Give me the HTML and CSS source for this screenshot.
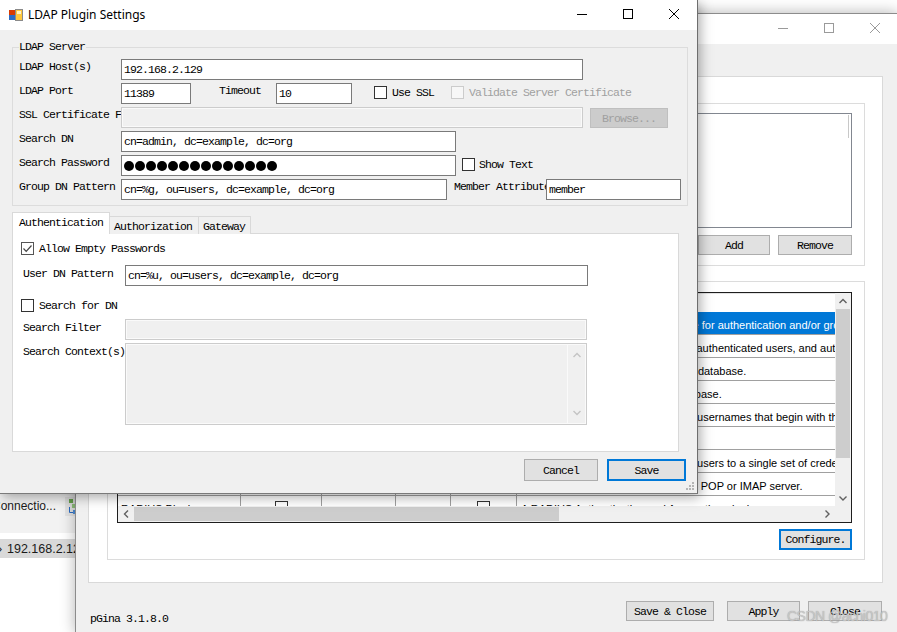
FILE: index.html
```html
<!DOCTYPE html>
<html>
<head>
<meta charset="utf-8">
<title>LDAP Plugin Settings</title>
<link rel="stylesheet" href="styles.css">
</head>
<body>
<div class="screen">

  <div class="bgapp">
    <div class="bg-top"></div>
    <div class="bg-conn">
      <span class="bg-conn-text">Connectio...</span>
      <span class="bg-icon">
        <svg width="9" height="16" viewBox="0 0 9 16"><rect x="1" y="1" width="4" height="4" fill="#6aa84f"/><rect x="4" y="6" width="4" height="4" fill="#93c47d"/><path d="M1.5 9v5.5H7" fill="none" stroke="#2b6cc4"/><rect x="5" y="12" width="4" height="4" fill="#4f8fd8"/></svg>
      </span>
    </div>
    <div class="bg-gap"></div>
    <div class="bg-host"><span class="bg-arrow">›</span><span class="bg-ip">192.168.2.12</span></div>
  </div>

  <div class="pgina">
    <div class="titlebar">
      <div class="caps inactive">
        <div class="cap"><svg width="10" height="10"><path d="M0 5.5H10" stroke="currentColor"/></svg></div>
        <div class="cap"><svg width="10" height="10"><rect x="0.5" y="0.5" width="9" height="9" fill="none" stroke="currentColor"/></svg></div>
        <div class="cap"><svg width="10" height="10"><path d="M0 0L10 10M10 0L0 10" stroke="currentColor"/></svg></div>
      </div>
    </div>
    <div class="pg-body">
      <div class="panel">
        <div class="group g1">
          <div class="listbox"><span class="lb-stub"></span></div>
          <div class="btnrow">
            <div class="btn w72">Add</div>
            <div class="btn w74">Remove</div>
          </div>
        </div>
        <div class="group g2">
          <div class="dgv">
            <div class="dgv-cells">
              <div class="dgv-head"></div>
              <div class="dgv-row sel"><div class="c c1">LDAP</div><div class="c c2"><span class="cb"></span></div><div class="c c3"><span class="cb"></span></div><div class="c c4"></div><div class="c c5"><span class="cb"></span></div><div class="c c6">Uses the LDAP server as the source for authentication and/or group authorization.</div></div>
              <div class="dgv-row"><div class="c c1">Local Machine</div><div class="c c2"><span class="cb"></span></div><div class="c c3"><span class="cb"></span></div><div class="c c4"><span class="cb"></span></div><div class="c c5"><span class="cb"></span></div><div class="c c6">Manages all local user accounts for authenticated users, and authorizes by group membership.</div></div>
              <div class="dgv-row"><div class="c c1">MySQL Auth</div><div class="c c2"><span class="cb"></span></div><div class="c c3"><span class="cb"></span></div><div class="c c4"></div><div class="c c5"><span class="cb"></span></div><div class="c c6">Uses the MySQL server as the user database.</div></div>
              <div class="dgv-row"><div class="c c1">MySQL Logger</div><div class="c c2"></div><div class="c c3"></div><div class="c c4"></div><div class="c c5"></div><div class="c c6">Logs all events to your MySQL database.</div></div>
              <div class="dgv-row"><div class="c c1">Username Mod</div><div class="c c2"><span class="cb"></span></div><div class="c c3"><span class="cb"></span></div><div class="c c4"><span class="cb"></span></div><div class="c c5"></div><div class="c c6">Removes the domain prefix from all usernames that begin with the domain name.</div></div>
              <div class="dgv-row"><div class="c c1">Scripting</div><div class="c c2"></div><div class="c c3"></div><div class="c c4"></div><div class="c c5"><span class="cb"></span></div><div class="c c6">Runs login scripts.</div></div>
              <div class="dgv-row"><div class="c c1">Single User</div><div class="c c2"></div><div class="c c3"></div><div class="c c4"></div><div class="c c5"><span class="cb"></span></div><div class="c c6">Maps each externally authenticated users to a single set of credentials.</div></div>
              <div class="dgv-row"><div class="c c1">POP/IMAP</div><div class="c c2"><span class="cb"></span></div><div class="c c3"></div><div class="c c4"></div><div class="c c5"></div><div class="c c6">Authenticates all the users against a POP or IMAP server.</div></div>
              <div class="dgv-row"><div class="c c1">RADIUS Plugin</div><div class="c c2"><span class="cb"></span></div><div class="c c3"></div><div class="c c4"></div><div class="c c5"><span class="cb"></span></div><div class="c c6">A RADIUS Authentication and Accounting plugin.</div></div>
            </div>
            <div class="vscroll">
              <div class="sarrow"><svg width="16" height="16"><path d="M4.5 10L8 6.5L11.5 10" fill="none" stroke="#606060" stroke-width="1.4"/></svg></div>
              <div class="thumb-v"></div>
              <div class="strack"></div>
              <div class="sarrow"><svg width="16" height="16"><path d="M4.5 6.5L8 10L11.5 6.5" fill="none" stroke="#606060" stroke-width="1.4"/></svg></div>
            </div>
            <div class="hscroll">
              <div class="sarrow"><svg width="16" height="16"><path d="M10 4.5L6.5 8L10 11.5" fill="none" stroke="#606060" stroke-width="1.4"/></svg></div>
              <div class="thumb-h"></div>
              <div class="strack"></div>
              <div class="sarrow"><svg width="16" height="16"><path d="M6.5 4.5L10 8L6.5 11.5" fill="none" stroke="#606060" stroke-width="1.4"/></svg></div>
            </div>
            <div class="corner"></div>
          </div>
          <div class="btnrow">
            <div class="btn btn-focus configure">Configure.</div>
          </div>
        </div>
      </div>
      <div class="pg-footer">
        <span class="version">pGina 3.1.8.0</span>
        <div class="footer-btns">
          <div class="btn saveclose">Save &amp; Close</div>
          <div class="btn apply">Apply</div>
          <div class="btn close">Close</div>
        </div>
      </div>
    </div>
  </div>

  <div class="dialog">
    <div class="titlebar dlg-titlebar">
      <svg class="app-icon" width="14" height="12" viewBox="0 0 14 12"><rect x="0" y="1" width="6" height="5" fill="#d83b01"/><rect x="0" y="6" width="6" height="5" fill="#2b6cc4"/><rect x="6.5" y="0.5" width="7" height="11" fill="#ffc83d" stroke="#8a8a8a"/><rect x="8" y="2" width="4" height="3" fill="#fff3c4"/></svg>
      <span class="title">LDAP Plugin Settings</span>
      <div class="caps">
        <div class="cap"><svg width="10" height="10"><path d="M0 5.5H10" stroke="currentColor"/></svg></div>
        <div class="cap"><svg width="10" height="10"><rect x="0.5" y="0.5" width="9" height="9" fill="none" stroke="currentColor"/></svg></div>
        <div class="cap"><svg width="10" height="10"><path d="M0 0L10 10M10 0L0 10" stroke="currentColor"/></svg></div>
      </div>
    </div>
    <div class="dlg-body">
      <div class="groupbox">
        <span class="legend">LDAP Server</span>
        <div class="frow"><span class="lbl">LDAP Host(s)</span><div class="tb w462">192.168.2.129</div></div>
        <div class="frow">
          <span class="lbl">LDAP Port</span><div class="tb w70">11389</div>
          <span class="lbl-timeout">Timeout</span><div class="tb w76">10</div>
          <div class="chk ssl"><span class="cb"></span>Use SSL</div>
          <div class="chk validate disabled"><span class="cb"></span>Validate Server Certificate</div>
        </div>
        <div class="frow"><span class="lbl">SSL Certificate File</span><div class="tb w462 tb-disabled"></div><div class="btn btn-disabled browse">Browse...</div></div>
        <div class="frow"><span class="lbl">Search DN</span><div class="tb w335">cn=admin, dc=example, dc=org</div></div>
        <div class="frow">
          <span class="lbl">Search Password</span>
          <div class="tb w335 pw"><i></i><i></i><i></i><i></i><i></i><i></i><i></i><i></i><i></i><i></i><i></i><i></i><i></i><i></i></div>
          <div class="chk showtext"><span class="cb"></span>Show Text</div>
        </div>
        <div class="frow">
          <span class="lbl">Group DN Pattern</span><div class="tb w326">cn=%g, ou=users, dc=example, dc=org</div>
          <span class="lbl-member">Member Attribute</span><div class="tb w135">member</div>
        </div>
      </div>
      <div class="tabs">
        <div class="tab active">Authentication</div>
        <div class="tab t2">Authorization</div>
        <div class="tab t3">Gateway</div>
      </div>
      <div class="tabpage">
        <div class="chk tp-chk1"><span class="cb checked"><svg width="11" height="11" viewBox="0 0 11 11"><path d="M1.5 5.5L4.2 8.3L9.5 2.5" fill="none" stroke="#444" stroke-width="1.2"/></svg></span>Allow Empty Passwords</div>
        <div class="frow tp-row1"><span class="lbl">User DN Pattern</span><div class="tb w463">cn=%u, ou=users, dc=example, dc=org</div></div>
        <div class="chk tp-chk2"><span class="cb"></span>Search for DN</div>
        <div class="frow tp-row2"><span class="lbl">Search Filter</span><div class="tb tb-disabled w462"></div></div>
        <div class="frow tp-row3">
          <span class="lbl lbl-top">Search Context(s)</span>
          <div class="ta tb-disabled">
            <div class="ta-scroll">
              <svg width="16" height="16"><path d="M4.5 9L8 5.5L11.5 9" fill="none" stroke="#c4c4c4" stroke-width="1.4"/></svg>
              <svg width="16" height="16"><path d="M4.5 6L8 9.5L11.5 6" fill="none" stroke="#c4c4c4" stroke-width="1.4"/></svg>
            </div>
          </div>
        </div>
      </div>
      <div class="dlg-btns">
        <div class="btn cancel">Cancel</div>
        <div class="btn btn-focus save">Save</div>
      </div>
    </div>
    <svg class="grip" width="9" height="9" viewBox="0 0 9 9"><g fill="#b4b4b4"><rect x="6" y="0" width="2" height="2"/><rect x="3" y="3" width="2" height="2"/><rect x="6" y="3" width="2" height="2"/><rect x="0" y="6" width="2" height="2"/><rect x="3" y="6" width="2" height="2"/><rect x="6" y="6" width="2" height="2"/></g></svg>
  </div>

  <div class="watermark">CSDN @achi010</div>
</div>
</body>
</html>
```

FILE: styles.css
```css
* { box-sizing: border-box; }
html, body { margin: 0; padding: 0; }
body {
  width: 897px; height: 632px; overflow: hidden; background: #fff;
  font-family: "Liberation Mono", "DejaVu Sans Mono", monospace;
  font-size: 11.5px; letter-spacing: -0.9px; color: #000;
}
.screen { position: relative; width: 897px; height: 632px; overflow: hidden; }

/* ---------- background application strip ---------- */
.bgapp {
  position: absolute; left: 0; top: 0; width: 80px; height: 632px;
  background: #fff; display: flex; flex-direction: column;
  font-family: "Liberation Sans", Arial, sans-serif; font-size: 12px; letter-spacing: 0; color: #1a1a1a;
}
.bg-top { height: 494px; flex: none; }
.bg-conn { height: 39px; flex: none; background: #f2f2f2; display: flex; align-items: flex-start; }
.bg-conn-text { margin-left: -8px; margin-top: 5px; line-height: 14px; width: 73px; white-space: nowrap; flex: none; }
.bg-icon { margin-top: 3px; width: 12px; height: 19px; background: #e4e4e4; display: flex; justify-content: flex-end; padding-top: 1px; flex: none; }
.bg-gap { height: 6px; flex: none; }
.bg-host { height: 19px; flex: none; background: #d9d9d9; display: flex; align-items: center; font-size: 12.5px; white-space: nowrap; }
.bg-arrow { margin-left: -2px; width: 10px; }

/* ---------- shared window chrome ---------- */
.titlebar { height: 30px; background: #fff; display: flex; align-items: flex-start; }
.caps { margin-left: auto; display: flex; color: #000; }
.caps.inactive { color: #9a9a9a; }
.cap { width: 46px; height: 28px; display: flex; align-items: center; justify-content: center; }
.cap svg { display: block; }

.btn {
  background: #e1e1e1; border: 1px solid #adadad; display: flex;
  align-items: center; justify-content: center; white-space: nowrap; height: 20px; flex: none;
}
.btn-focus { border: 2px solid #0078d7; }
.btn-disabled { background: #cccccc; border-color: #bfbfbf; color: #a0a0a0; }

.cb { width: 13px; height: 13px; border: 1px solid #333; background: #fff; display: inline-flex; align-items: center; justify-content: center; flex: none; }
.chk { display: flex; align-items: center; gap: 5px; height: 14px; white-space: nowrap; }
.chk.disabled { color: #a0a0a0; }
.chk.disabled .cb { border-color: #cccccc; background: #f7f7f7; }

/* ---------- pGina main window ---------- */
.pgina {
  position: absolute; left: 75px; top: 13px; width: 823px; height: 620px;
  background: #f0f0f0; border-left: 1px solid #8c8c8c; border-top: 1px solid #8c8c8c;
  box-shadow: 0 0 14px rgba(0,0,0,0.3);
}
.pg-body { padding: 32px 0 0 12px; }
.panel { width: 795px; height: 507px; background: #fff; border: 1px solid #d9d9d9; padding: 26px 0 0 18px; }
.group { width: 758px; border: 1px solid #dcdcdc; background: #fff; }
.g1 { height: 163px; padding: 9px 12px 0 9px; }
.g2 { height: 279px; margin-top: 15px; padding: 10px 12px 0 9px; }
.listbox { height: 115px; border: 1px solid #828790; background: #fff; display: flex; justify-content: flex-end; }
.lb-stub { width: 1px; height: 23px; margin: 1px 2px 0 0; background: #c8c8c8; }
.btnrow { display: flex; justify-content: flex-end; gap: 8px; margin-top: 7px; }
.w72 { width: 72px; }
.w74 { width: 74px; }
.configure { width: 73px; height: 21px; }
.g2 .btnrow { margin-top: 6px; }

.dgv {
  width: 735px; height: 231px; border: 1px solid #1e1e1e; background: #fff;
  display: grid; grid-template-columns: 717px 16px; grid-template-rows: 213px 16px;
}
.dgv-cells { overflow: hidden; font-family: "Liberation Sans", Arial, sans-serif; font-size: 11px; letter-spacing: 0; }
.dgv-head { height: 19px; border-top: 1px solid #e3e3e3; }
.dgv-row { display: flex; height: 23px; border-bottom: 1px solid #a0a0a0; width: max-content; }
.dgv-row.sel { background: #0078d7; color: #fff; }
.c { flex: none; height: 22px; border-right: 1px solid #a0a0a0; display: flex; align-items: center; white-space: nowrap; overflow: hidden; padding-top: 3px; }
.c1 { width: 123px; padding-left: 3px; }
.c2 { width: 81px; justify-content: center; }
.c3 { width: 74px; justify-content: center; }
.c4 { width: 55px; justify-content: center; }
.c5 { width: 66px; justify-content: center; }
.c2, .c3, .c4, .c5 { padding-top: 0; }
.c6 { width: 720px; padding-left: 4px; border-right: none; }
.vscroll { background: #f0f0f0; display: flex; flex-direction: column; }
.hscroll { background: #f0f0f0; display: flex; }
.sarrow { width: 16px; height: 16px; flex: none; }
.sarrow svg { display: block; }
.thumb-v { height: 149px; margin: 0 1px; background: #cdcdcd; flex: none; }
.thumb-h { width: 425px; margin: 1px 0; background: #cdcdcd; flex: none; }
.strack { flex: 1; }
.corner { background: #f0f0f0; }

.pg-footer { display: flex; align-items: flex-start; width: 795px; margin-top: 18px; padding-right: 1px; }
.version { margin: 11px 0 0 2px; line-height: 14px; }
.footer-btns { margin-left: auto; display: flex; }
.saveclose { width: 88px; margin-right: 13px; }
.apply { width: 73px; margin-right: 8px; }
.close { width: 74px; }

/* ---------- LDAP dialog ---------- */
.dialog {
  position: absolute; left: 0; top: 0; width: 698px; height: 494px;
  background: #f0f0f0; border-right: 1px solid #6e6e6e; border-bottom: 1px solid #7a7a7a;
  box-shadow: 2px 3px 12px rgba(0,0,0,0.35);
}
.dlg-titlebar { align-items: flex-start; }
.app-icon { margin: 9px 0 0 9px; flex: none; }
.title {
  margin: 7px 0 0 5px; font-family: "Segoe UI", "Noto Sans", "Liberation Sans", sans-serif;
  font-size: 12px; letter-spacing: 0; line-height: 16px;
}
.dlg-body { padding: 0 11px 0 12px; }
.groupbox {
  position: relative; width: 676px; height: 159px; margin-top: 17px;
  border: 1px solid #dcdcdc; padding: 11px 0 0 6px;
}
.legend { position: absolute; left: 6px; top: -8px; background: #f0f0f0; padding: 0 1px 0 0; line-height: 14px; }
.frow { display: flex; align-items: flex-start; height: 21px; margin-bottom: 3px; }
.lbl { width: 102px; flex: none; white-space: nowrap; overflow: hidden; line-height: 14px; margin-top: 1px; }
.tb {
  height: 21px; border: 1px solid #7a7a7a; background: #fff; flex: none;
  display: flex; align-items: center; padding: 0 2px; white-space: nowrap; overflow: hidden;
}
.tb-disabled { border-color: #cccccc; background: #f0f0f0; box-shadow: inset 0 0 0 1px #fafafa; }
.w462 { width: 462px; }
.w463 { width: 463px; }
.w70 { width: 70px; }
.w76 { width: 76px; }
.w335 { width: 335px; }
.w326 { width: 326px; }
.w135 { width: 135px; }
.lbl-timeout { margin-left: 28px; width: 57px; flex: none; line-height: 14px; margin-top: 1px; }
.frow .chk { margin-top: 2px; }
.ssl { margin-left: 22px; }
.validate { margin-left: 17px; }
.browse { width: 78px; margin-left: 7px; margin-top: 1px; }
.pw { gap: 1px; padding-left: 2px; }
.pw i { width: 10px; height: 10px; border-radius: 50%; background: #000; flex: none; }
.showtext { margin-left: 6px; gap: 4px; }
.lbl-member { margin-left: 7px; width: 92px; flex: none; white-space: nowrap; overflow: hidden; line-height: 14px; margin-top: 1px; }

.tabs { display: flex; align-items: flex-end; height: 22px; margin-top: 6px; }
.tab { border: 1px solid #d9d9d9; border-bottom: none; white-space: nowrap; line-height: 14px; }
.tab.active { position: relative; z-index: 2; height: 22px; width: 98px; background: #fff; padding: 3px 0 0 6px; }
.tab.t2 { height: 18px; width: 89px; border-left: none; background: #f0f0f0; padding: 3px 0 0 4px; }
.tab.t3 { height: 18px; width: 52px; border-left: none; background: #f0f0f0; padding: 3px 0 0 4px; }
.tabpage {
  width: 667px; height: 219px; margin-top: -1px; background: #fff;
  border: 1px solid #d9d9d9; padding: 7px 0 0 10px;
}
.tabpage .lbl { margin-top: 2px; }
.tp-chk1 { margin-left: -2px; }
.cb.checked { border-color: #555; }
.tp-row1 { margin-top: 10px; margin-bottom: 0; }
.tp-chk2 { margin-left: -2px; margin-top: 12px; }
.tp-row2 { margin-top: 7px; margin-bottom: 0; }
.tp-row3 { margin-top: 3px; height: 82px; }
.ta { width: 462px; height: 82px; border: 1px solid #cccccc; background: #f0f0f0; display: flex; justify-content: flex-end; padding: 1px; flex: none; }
.ta-scroll { width: 18px; border-left: 1px solid #fafafa; display: flex; flex-direction: column; justify-content: space-between; align-items: center; padding: 3px 0 2px; }
.ta-scroll svg { display: block; }

.dlg-btns { display: flex; justify-content: flex-end; gap: 9px; margin-top: 7px; }
.cancel { width: 74px; height: 22px; }
.save { width: 79px; height: 22px; }
.grip { position: absolute; right: 2px; bottom: 2px; }

.watermark {
  position: absolute; left: 787px; top: 608px;
  font-family: "Liberation Sans", Arial, sans-serif; font-size: 14px; letter-spacing: -0.5px;
  color: rgba(205,205,205,0.85); text-shadow: 0 0 1px rgba(90,90,90,0.55);
}
```
